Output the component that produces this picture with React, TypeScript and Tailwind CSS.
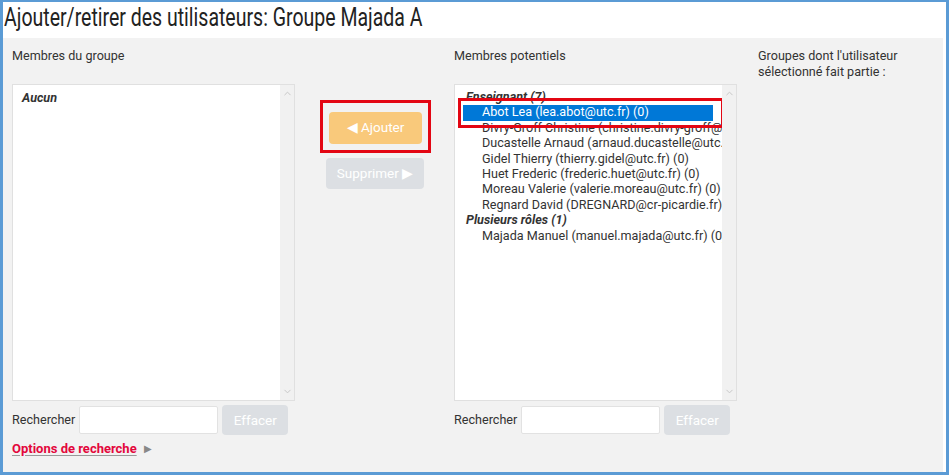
import { ChevronUp, ChevronDown } from "lucide-react";

const potentiels = [
  "Divry-Groff Christine (christine.divry-groff@utc.fr) (0)",
  "Ducastelle Arnaud (arnaud.ducastelle@utc.fr) (0)",
  "Gidel Thierry (thierry.gidel@utc.fr) (0)",
  "Huet Frederic (frederic.huet@utc.fr) (0)",
  "Moreau Valerie (valerie.moreau@utc.fr) (0)",
  "Regnard David (DREGNARD@cr-picardie.fr) (0)",
];

function Scrollbar() {
  return (
    <div className="absolute right-0 top-0 bottom-0 w-[14px] bg-[#f1f1f1] flex flex-col justify-between items-center py-[3px]">
      <ChevronUp size={11} strokeWidth={2} className="text-[#c4c4c4]" />
      <ChevronDown size={11} strokeWidth={2} className="text-[#c4c4c4]" />
    </div>
  );
}

function SearchRow() {
  return (
    <div className="flex items-center mt-[4px] h-[30px]">
      <span className="text-[12.6px] text-[#333] mr-[4px]">Rechercher</span>
      <div className="w-[139px] h-[28px] bg-white border border-[#e2e2e2] rounded-[2px]" />
      <button className="ml-[4px] w-[66px] h-[30px] rounded-[4px] bg-[#dcdfe3] text-white text-[13.5px]">
        Effacer
      </button>
    </div>
  );
}

export default function App() {
  return (
    <div
      className="w-[949px] h-[475px] border-l-[3px] border-t-[2px] border-r-[3px] border-b-[3px] border-[#5b9bd5] bg-white flex flex-col overflow-hidden"
      style={{ fontFamily: "Roboto, 'Liberation Sans', sans-serif" }}
    >
      <div className="h-[36px] bg-white pt-[1px] pl-[1px] shrink-0 overflow-hidden">
        <h1 className="text-[25px] leading-[30px] text-[#222] whitespace-nowrap scale-x-[0.78] origin-left">
          Ajouter/retirer des utilisateurs: Groupe Majada A
        </h1>
      </div>
      <div className="flex-1 bg-[#f2f2f2] mr-[3px] pl-[9px] pt-[10px] text-[#333]">
        <div className="grid grid-cols-[283px_159px_283px_auto]">
          {/* membres du groupe */}
          <div>
            <div className="text-[12.6px] h-[15px] leading-[15px]">Membres du groupe</div>
            <div className="relative mt-[21px] h-[317px] bg-white border border-[#e0e0e0]">
              <div className="pl-[9px] pt-[4px] text-[12.6px] font-bold italic text-[#333]">Aucun</div>
              <Scrollbar />
            </div>
            <SearchRow />
            <div className="mt-[4px] flex items-center">
              <a className="text-[13px] font-bold text-[#e3073c] underline underline-offset-2 decoration-[#999]">
                Options de recherche
              </a>
              <span className="ml-[7px] text-[10px] text-[#888]">▶</span>
            </div>
          </div>

          {/* boutons */}
          <div className="pt-[52px] flex flex-col">
            <div className="ml-[25px] w-[111px] h-[53px] border-[3px] border-[#e30613] flex items-center justify-center pt-[2px]">
              <button className="w-[93px] h-[32px] rounded-[4px] bg-[#f9c97b] text-white text-[13.5px]">
                ◀ Ajouter
              </button>
            </div>
            <button className="ml-[31px] mt-[5px] w-[98px] h-[31px] rounded-[4px] bg-[#dcdfe3] text-white text-[13.5px]">
              Supprimer ▶
            </button>
          </div>

          {/* membres potentiels */}
          <div>
            <div className="text-[12.6px] h-[15px] leading-[15px]">Membres potentiels</div>
            <div className="relative mt-[21px] h-[317px] bg-white border border-[#e0e0e0] overflow-hidden">
              <div className="pt-[4px] text-[12.6px] leading-[15.4px] whitespace-nowrap w-[268px] overflow-hidden">
                <div className="pl-[11px] font-bold italic">Enseignant (7)</div>
                <div className="relative">
                  <div className="absolute left-[8px] top-[1px] w-[250px] h-[16px] bg-[#0078d7]" />
                  <div className="relative pl-[27px] text-white">Abot Lea (lea.abot@utc.fr) (0)</div>
                </div>
                {potentiels.map((p) => (
                  <div key={p} className="pl-[27px]">
                    {p}
                  </div>
                ))}
                <div className="pl-[11px] font-bold italic">Plusieurs rôles (1)</div>
                <div className="pl-[27px]">Majada Manuel (manuel.majada@utc.fr) (0)</div>
              </div>
              <div className="absolute left-[3px] top-[13px] w-[266px] h-[30px] border-[3px] border-[#e30613]" />
              <Scrollbar />
            </div>
            <SearchRow />
          </div>

          {/* groupes */}
          <div className="pl-[21px] text-[12.6px] leading-[16px]">
            Groupes dont l'utilisateur
            <br />
            sélectionné fait partie :
          </div>
        </div>
      </div>
    </div>
  );
}
